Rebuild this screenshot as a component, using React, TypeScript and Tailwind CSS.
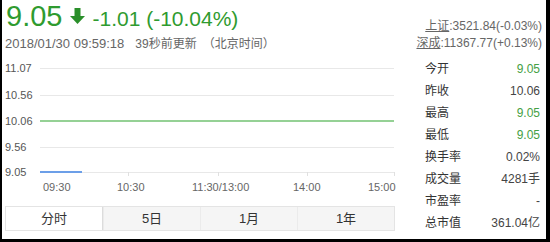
import React from "react";

const FONT = { fontFamily: '"Liberation Sans", Arial, "Noto Sans CJK SC", sans-serif' };

const Y_LABELS = [
  { v: "11.07", y: 8 },
  { v: "10.56", y: 35 },
  { v: "10.06", y: 61 },
  { v: "9.56", y: 87 },
  { v: "9.05", y: 112 },
];

const X_LABELS = [
  { t: "09:30", x: 41 },
  { t: "10:30", x: 115 },
  { t: "11:30/13:00", x: 190 },
  { t: "14:00", x: 291 },
  { t: "15:00", x: 366 },
];

const STATS = [
  { k: "今开", v: "9.05", green: true },
  { k: "昨收", v: "10.06" },
  { k: "最高", v: "9.05", green: true },
  { k: "最低", v: "9.05", green: true },
  { k: "换手率", v: "0.02%" },
  { k: "成交量", v: "4281手" },
  { k: "市盈率", v: "-" },
  { k: "总市值", v: "361.04亿" },
];

const TABS = ["分时", "5日", "1月", "1年"];

function Chart() {
  return (
    <svg width="396" height="140" className="block" style={FONT}>
      {Y_LABELS.map(({ v, y }, i) => (
        <g key={v}>
          {i === 2 ? (
            <line x1="38" x2="392" y1={y} y2={y} stroke="#95d195" strokeWidth="2" />
          ) : (
            <line x1={i === 4 ? 80 : 38} x2="392" y1={y + 0.5} y2={y + 0.5} stroke="#e8e8e8" />
          )}
          <text x="3" y={y + 4} fontSize="11" fill="#555">
            {v}
          </text>
        </g>
      ))}
      <line x1="38" x2="80" y1="112" y2="112" stroke="#3b7fe0" strokeWidth="1.5" />
      {[126, 216, 305, 392].map((x) => (
        <line key={x} x1={x + 0.5} x2={x + 0.5} y1="112" y2="116" stroke="#e0e0e0" />
      ))}
      {X_LABELS.map(({ t, x }) => (
        <text key={t} x={x} y="131" fontSize="11" fill="#666">
          {t}
        </text>
      ))}
    </svg>
  );
}

export default function App() {
  return (
    <div
      className="flex h-[242px] w-[550px] overflow-hidden border-b-[3px] border-l-2 border-r-4 border-black bg-white text-[#333]"
      style={FONT}
    >
      <div className="w-[396px] shrink-0">
        <div className="flex h-8 items-baseline pl-1 text-[#2f9b2f]">
          <span className="text-[29px] leading-8">9.05</span>
          <svg width="15" height="16" viewBox="0 0 15 16" className="ml-[8px] self-center translate-y-[0px]">
            <path d="M4.5 0h6v8h4.5L7.5 16 0 8h4.5z" fill="#2a8f2a" />
          </svg>
          <span className="ml-[7px] text-[21px] leading-8">-1.01 (-10.04%)</span>
        </div>
        <div className="mt-1 flex h-4 items-center pl-[3px] text-[13px] leading-4 text-[#666]">
          <span>2018/01/30 09:59:18</span>
          <span className="ml-[11px] text-[12px]">39秒前更新</span>
          <span className="ml-[6px] text-[12px]">（北京时间）</span>
        </div>
        <div className="mt-[8px]">
          <Chart />
        </div>
        <div className="ml-[3px] mt-[6px] flex h-[25px] w-[390px] border border-[#e4e4e4] bg-[#f5f5f5] text-[13px]">
          {TABS.map((t, i) => (
            <div
              key={t}
              className={
                i === 0
                  ? "flex flex-1 items-center justify-center border-r border-[#dcdcdc] bg-white"
                  : "flex flex-1 items-center justify-center border-l border-[#ebebeb] first-of-type:border-l-0"
              }
            >
              {t}
            </div>
          ))}
        </div>
      </div>

      <div className="flex-1">
        <div className="pr-[4px] pt-[18px] text-right text-[12px] leading-[17px] text-[#666]">
          <div>
            <span className="underline">上证</span>:3521.84(-0.03%)
          </div>
          <div>
            <span className="underline">深成</span>:11367.77(+0.13%)
          </div>
        </div>
        <div className="mt-[6px] pl-[27px] pr-[6px] text-[12px]">
          {STATS.map(({ k, v, green }) => (
            <div key={k} className="flex h-[22px] items-center justify-between">
              <span className="text-[#333]">{k}</span>
              <span className={green ? "text-[#45a045]" : "text-[#444]"}>{v}</span>
            </div>
          ))}
        </div>
      </div>
    </div>
  );
}
